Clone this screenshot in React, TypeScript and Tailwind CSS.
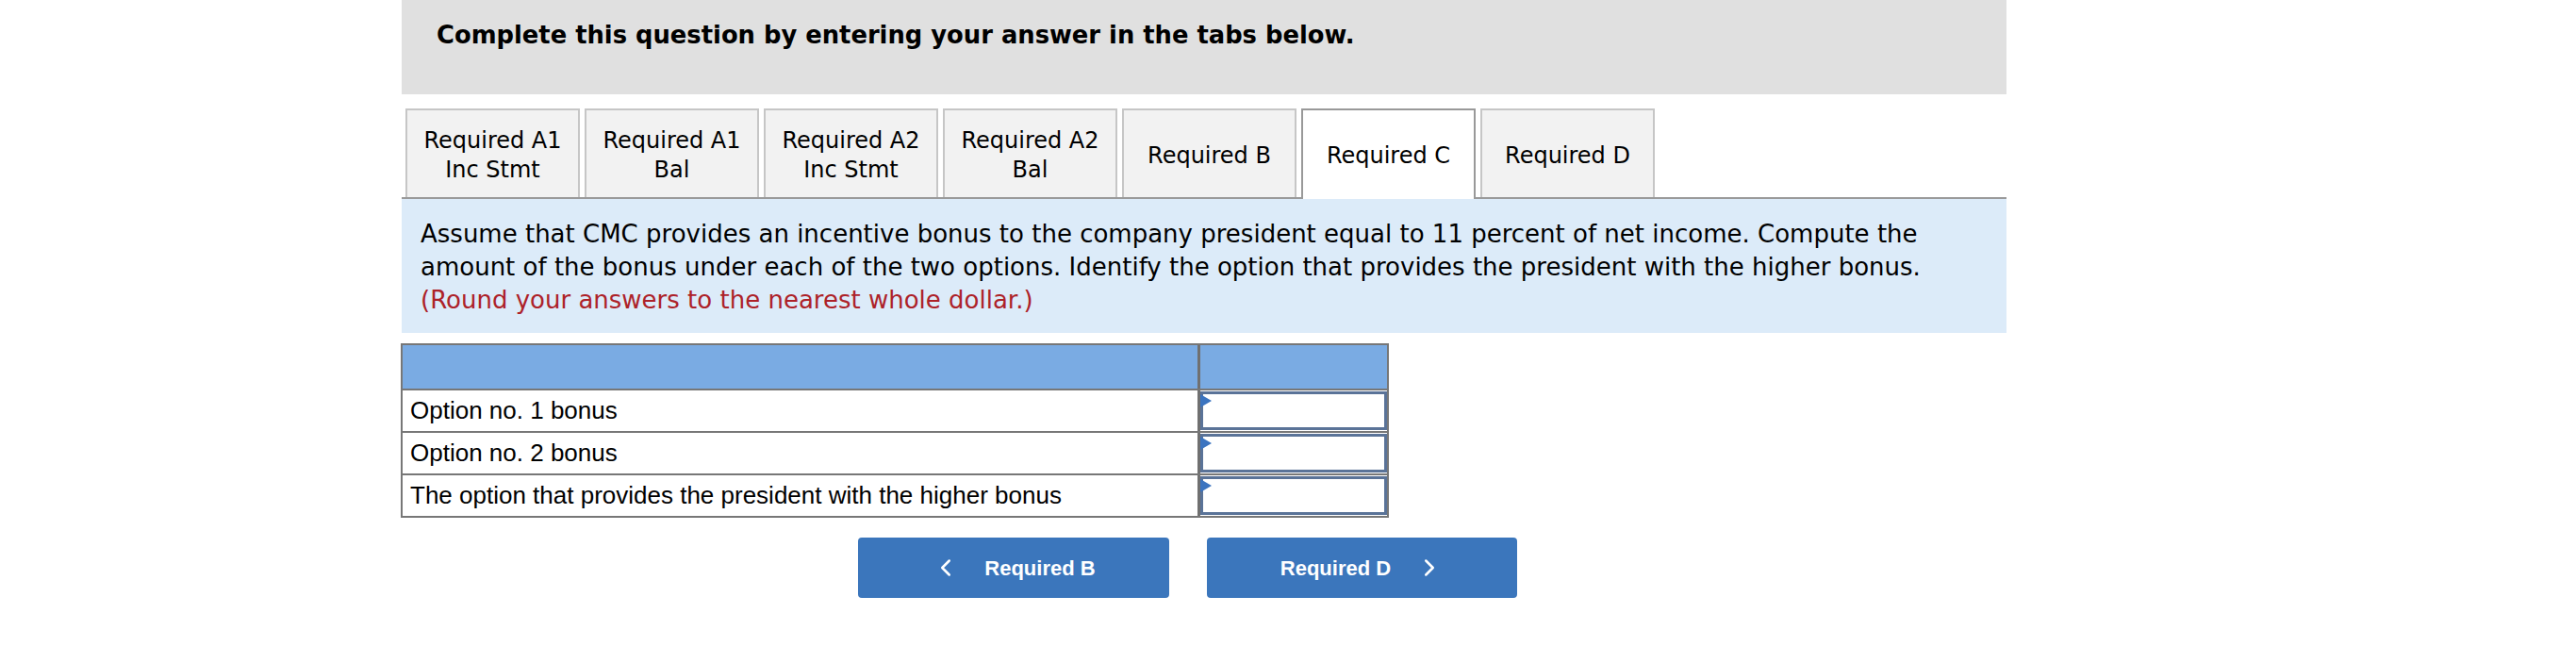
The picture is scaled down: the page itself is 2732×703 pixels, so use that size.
import { ChevronLeft, ChevronRight } from "lucide-react"

const tabs = [
  { top: "Required A1", bottom: "Inc Stmt" },
  { top: "Required A1", bottom: "Bal" },
  { top: "Required A2", bottom: "Inc Stmt" },
  { top: "Required A2", bottom: "Bal" },
  { top: "Required B" },
  { top: "Required C", active: true },
  { top: "Required D" },
]

const rows = [
  "Option no. 1 bonus",
  "Option no. 2 bonus",
  "The option that provides the president with the higher bonus",
]

function AnswerCell() {
  return (
    <div className="relative h-full border-[3px] border-[#5a7398] bg-white">
      <span className="absolute -left-[3px] top-0 h-0 w-0 border-y-[7px] border-l-[12px] border-y-transparent border-l-[#3b74c0]" />
    </div>
  )
}

export default function App() {
  return (
    <div className="h-[703px] w-[2732px] bg-white font-['DejaVu_Sans',sans-serif] text-black">
      <div className="ml-[426px] w-[1702px]">
        <div className="h-[100px] bg-[#e0e0e0] pl-[37px] pt-[21px]">
          <h2 className="text-[25.8px] font-bold leading-[32px]">
            Complete this question by entering your answer in the tabs below.
          </h2>
        </div>

        <div className="mt-[15px] flex h-[96px] gap-[5px] border-b-2 border-[#9a9a9a] pl-[4px]">
          {tabs.map((t, i) => (
            <div
              key={i}
              className={
                t.active
                  ? "z-10 -mb-[2px] flex h-[96px] w-[185px] flex-col items-center justify-center border-2 border-b-0 border-[#999] bg-white pt-[2px] text-[24px] leading-[31px]"
                  : "flex h-[94px] w-[185px] flex-col items-center justify-center border-2 border-b-0 border-[#c6c6c6] bg-[#f2f2f2] pt-[4px] text-[24px] leading-[31px]"
              }
            >
              <span>{t.top}</span>
              {t.bottom && <span>{t.bottom}</span>}
            </div>
          ))}
        </div>

        <div className="h-[142px] bg-[#dcebf9] pl-[20px] pt-[20px] text-[26px] leading-[35px]">
          <p>
            <span className="block">
              Assume that CMC provides an incentive bonus to the company president equal to 11 percent of net income. Compute the
            </span>
            <span className="block">
              amount of the bonus under each of the two options. Identify the option that provides the president with the higher bonus.
            </span>
            <span className="block text-[#ad2229]">(Round your answers to the nearest whole dollar.)</span>
          </p>
        </div>

        <div className="-ml-[1px] mt-[11px] w-[1048px] border-2 border-[#777] font-['Liberation_Sans',Arial,sans-serif] text-[26px]">
          <div className="grid h-[46px] grid-cols-[846px_1fr] bg-[#7aabe3]">
            <div className="border-r-[3px] border-[#707070]" />
            <div />
          </div>
          {rows.map((r) => (
            <div key={r} className="grid h-[45px] grid-cols-[846px_1fr] border-t-2 border-[#777]">
              <div className="flex items-center border-r-[3px] border-[#707070] pl-[8px]">{r}</div>
              <div className="py-[1px]">
                <AnswerCell />
              </div>
            </div>
          ))}
        </div>

        <div className="mt-[21px] flex gap-[40px] pl-[484px] font-['Liberation_Sans',Arial,sans-serif] text-[22px] font-bold text-white">
          <button className="flex h-[64px] w-[330px] items-center justify-center gap-[26px] rounded-[4px] bg-[#3b76bc]">
            <ChevronLeft size={30} strokeWidth={2} />
            <span>Required B</span>
          </button>
          <button className="flex h-[64px] w-[329px] items-center justify-center gap-[26px] rounded-[4px] bg-[#3b76bc]">
            <span>Required D</span>
            <ChevronRight size={30} strokeWidth={2} />
          </button>
        </div>
      </div>
    </div>
  )
}
